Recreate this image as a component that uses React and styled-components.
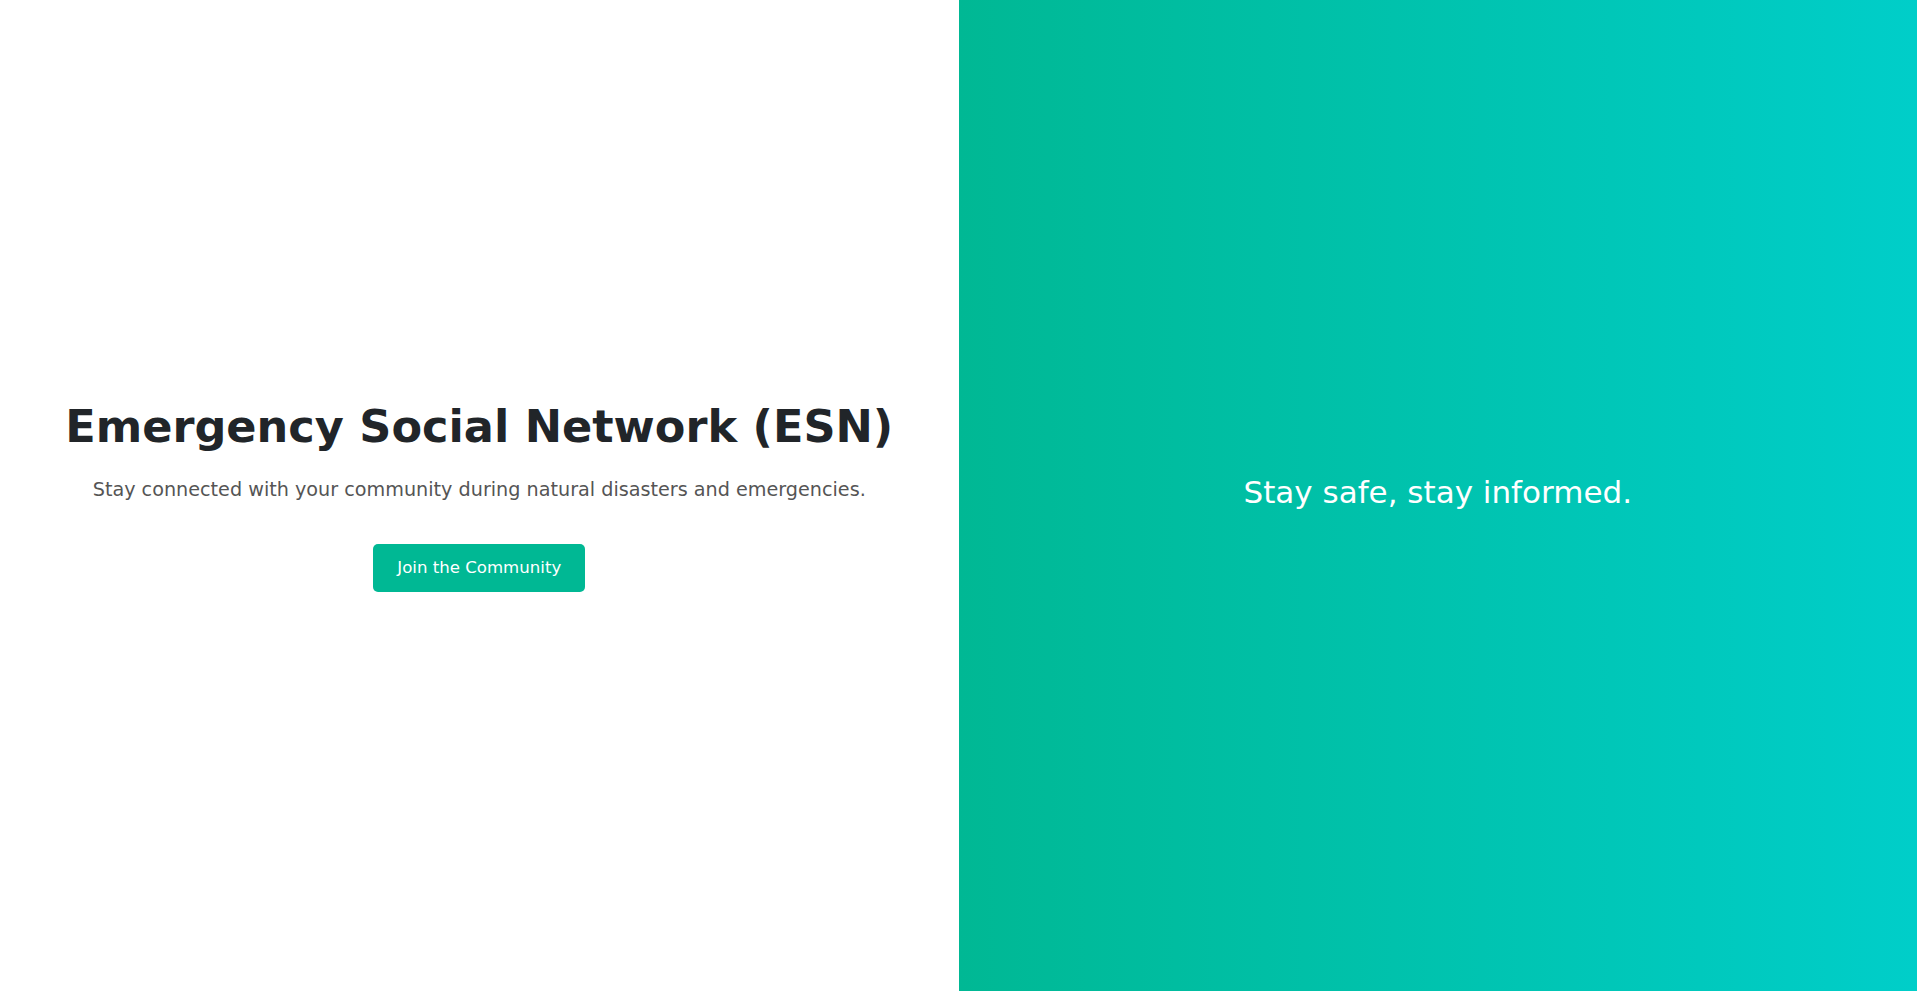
import React from "react";
import styled, { createGlobalStyle } from "styled-components";

const GlobalStyle = createGlobalStyle`
  html, body { margin: 0; padding: 0; }
  body {
    font-family: "DejaVu Sans", "Liberation Sans", sans-serif;
    background: #ffffff;
  }
  * { box-sizing: border-box; }
`;

const Page = styled.div`
  display: flex;
  width: 100%;
  height: 991px;
`;

const Hero = styled.section`
  flex: 1 1 50%;
  display: flex;
  flex-direction: column;
  align-items: center;
  justify-content: center;
  background: #ffffff;
  text-align: center;
`;

const Title = styled.h1`
  margin: 0;
  font-size: 44.6px;
  line-height: 54px;
  font-weight: 700;
  color: #212529;
  white-space: nowrap;
`;

const Subtitle = styled.p`
  margin: 22px 0 0;
  font-size: 19.2px;
  line-height: 28px;
  font-weight: 400;
  color: #555555;
  white-space: nowrap;
`;

const JoinButton = styled.button`
  margin-top: 40px;
  padding: 12px 24px;
  font-family: inherit;
  font-size: 16.6px;
  line-height: 24px;
  color: #ffffff;
  background: #00b894;
  border: none;
  border-radius: 5px;
  cursor: pointer;
`;

const Side = styled.section`
  flex: 1 1 50%;
  display: flex;
  align-items: center;
  justify-content: center;
  background: linear-gradient(to right, #00b894, #00cec9);
`;

const Tagline = styled.h2`
  margin: 0 0 8px;
  font-size: 31px;
  line-height: 40px;
  font-weight: 500;
  color: #ffffff;
`;

export default function App() {
  return (
    <>
      <GlobalStyle />
      <Page>
        <Hero>
          <Title>Emergency Social Network (ESN)</Title>
          <Subtitle>
            Stay connected with your community during natural disasters and emergencies.
          </Subtitle>
          <JoinButton>Join the Community</JoinButton>
        </Hero>
        <Side>
          <Tagline>Stay safe, stay informed.</Tagline>
        </Side>
      </Page>
    </>
  );
}
